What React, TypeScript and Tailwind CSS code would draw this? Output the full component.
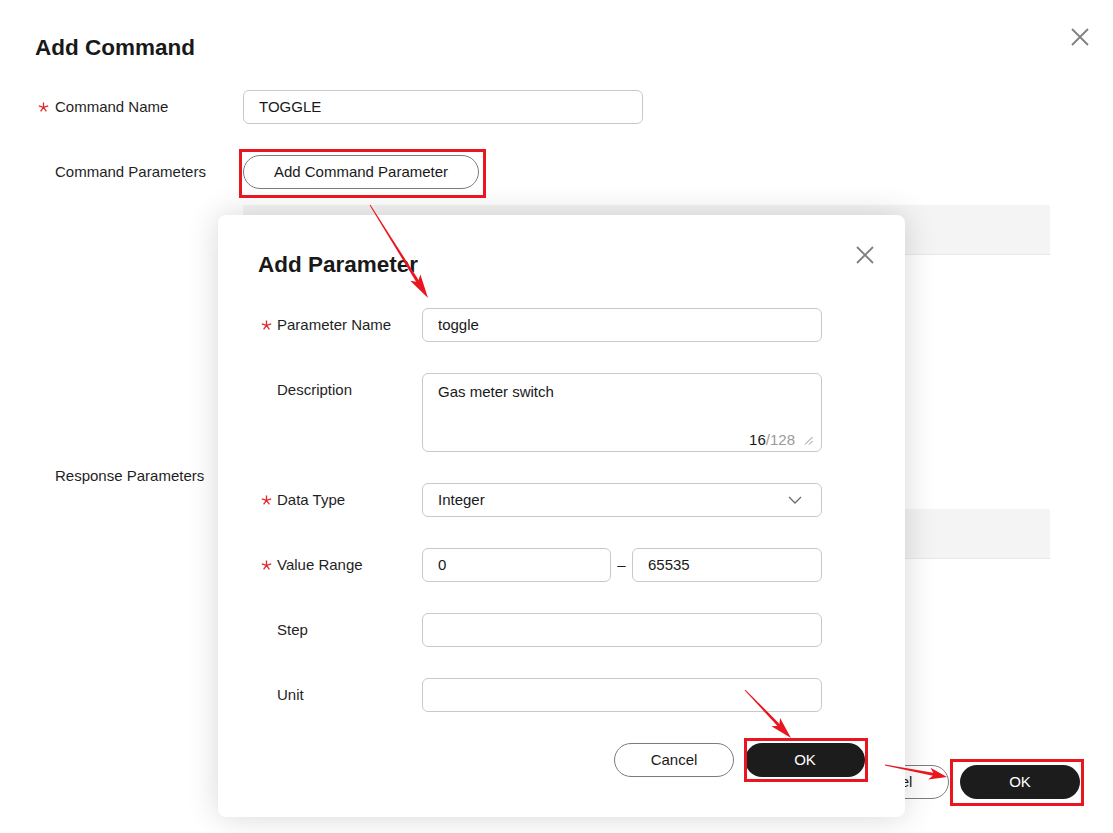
import React from "react";

const RED = "#e8161f";

function Asterisk() {
  return (
    <svg width="11" height="10" viewBox="0 0 11 10" className="shrink-0">
      <path
        d="M5.5 5.4V0.6M5.5 5.4L0.8 3.9M5.5 5.4L10.2 3.9M5.5 5.4L2.6 9.4M5.5 5.4L8.4 9.4"
        stroke="#e5262e"
        strokeWidth="1.3"
        fill="none"
      />
    </svg>
  );
}

function CloseIcon() {
  return (
    <svg width="18" height="18" viewBox="0 0 18 18">
      <path d="M1 1L17 17M17 1L1 17" stroke="#7f7f7f" strokeWidth="1.8" fill="none" />
    </svg>
  );
}

function Label({ children, required, slot }: { children: React.ReactNode; required?: boolean; slot: string }) {
  return (
    <div className="flex items-center h-[34px] text-[15px] text-[#1f1f1f]">
      <span className={`${slot} flex items-center`}>{required && <Asterisk />}</span>
      <span>{children}</span>
    </div>
  );
}

function Box({ value, className = "" }: { value?: string; className?: string }) {
  return (
    <div
      className={`h-[34px] flex items-center px-[15px] rounded-[6px] border border-[#c9c9c9] bg-white text-[15px] text-[#191919] ${className}`}
    >
      {value}
    </div>
  );
}

function Arrow({ x1, y1, x2, y2, head = 22 }: { x1: number; y1: number; x2: number; y2: number; head?: number }) {
  const dx = x2 - x1;
  const dy = y2 - y1;
  const len = Math.hypot(dx, dy);
  const ux = dx / len;
  const uy = dy / len;
  const nx = -uy;
  const ny = ux;
  const W = 6;
  const bx = x2 - ux * head;
  const by = y2 - uy * head;
  const mx = x2 - ux * (head - 5);
  const my = y2 - uy * (head - 5);
  const p = (x: number, y: number) => `${x.toFixed(1)},${y.toFixed(1)}`;
  const shaft = [
    p(x1 + nx * 0.5, y1 + ny * 0.5),
    p(mx + nx * 1.5, my + ny * 1.5),
    p(mx - nx * 1.5, my - ny * 1.5),
    p(x1 - nx * 0.5, y1 - ny * 0.5),
  ].join(" ");
  const tip = [p(x2, y2), p(bx + nx * W, by + ny * W), p(mx, my), p(bx - nx * W, by - ny * W)].join(" ");
  return (
    <g fill={RED}>
      <polygon points={shaft} />
      <polygon points={tip} />
    </g>
  );
}

export default function App() {
  return (
    <div className="relative w-[1113px] h-[833px] overflow-hidden bg-white text-[#191919] font-['Liberation_Sans',Arial,sans-serif]">
      {/* Add Command dialog */}
      <div className="flex flex-col h-full pt-[34px] pl-[35px]">
        <h2 className="text-[22.5px] leading-[28px] font-bold">Add Command</h2>

        <div className="mt-[28px] grid grid-cols-[208px_807px] gap-y-[31px]">
          <Label required slot="w-[20px] pl-[3px]">Command Name</Label>
          <Box value="TOGGLE" className="w-[400px]" />

          <Label slot="w-[20px]">Command Parameters</Label>
          <div>
            <button className="h-[34px] w-[236px] rounded-full border border-[#7c7c7c] bg-white text-[15px] text-[#191919]">
              Add Command Parameter
            </button>
            <div className="mt-[16px] h-[50px] bg-[#f4f4f4] border-b border-[#e9e9e9]" />
            <div className="h-[173px]" />
          </div>

          <Label slot="w-[20px]">Response Parameters</Label>
          <div>
            <button className="h-[34px] w-[236px] rounded-full border border-[#7c7c7c] bg-white text-[15px]">
              Add Response Parameter
            </button>
            <div className="mt-[16px] h-[50px] bg-[#f4f4f4] border-b border-[#e9e9e9]" />
          </div>
        </div>

        <div className="mt-auto flex justify-end gap-[11px] pr-[33px] pb-[34px]">
          <button className="h-[34px] w-[120px] rounded-full border border-[#7c7c7c] bg-white text-[15px]">Cancel</button>
          <button className="h-[34px] w-[120px] rounded-full bg-[#1c1c1c] text-white text-[15px]">OK</button>
        </div>
      </div>
      <button className="absolute top-[28px] right-[24px]">
        <CloseIcon />
      </button>

      {/* Add Parameter dialog */}
      <div className="absolute left-[218px] top-[215px] w-[687px] h-[602px] rounded-[8px] bg-white shadow-[0_0_32px_rgba(0,0,0,0.16)] flex flex-col px-[40px] pt-[36px] pb-[40px]">
        <button className="absolute top-[31px] right-[31px]">
          <CloseIcon />
        </button>
        <h3 className="text-[22.5px] leading-[28px] font-bold">Add Parameter</h3>

        <div className="mt-[29px] grid grid-cols-[164px_400px] gap-y-[31px]">
          <Label required slot="w-[19px] pl-[3px]">Parameter Name</Label>
          <Box value="toggle" />

          <Label slot="w-[19px]">Description</Label>
          <div className="relative h-[79px] rounded-[6px] border border-[#c9c9c9] px-[15px] pt-[8px] text-[15px] leading-[20px]">
            Gas meter switch
            <span className="absolute right-[26px] bottom-[3px] leading-[16px] text-[15px]">
              16<span className="text-[#9a9a9a]">/128</span>
            </span>
            <svg width="9" height="9" viewBox="0 0 9 9" className="absolute right-[8px] bottom-[6px]">
              <path d="M8.5 1L1 8.5M8.5 5L5 8.5" stroke="#8c8c8c" strokeWidth="1" fill="none" />
            </svg>
          </div>

          <Label required slot="w-[19px] pl-[3px]">Data Type</Label>
          <div className="h-[34px] flex items-center justify-between pl-[15px] pr-[19px] rounded-[6px] border border-[#c9c9c9] text-[15px]">
            <span>Integer</span>
            <svg width="14" height="8" viewBox="0 0 14 8">
              <path d="M1 1L7 7L13 1" stroke="#6b6b6b" strokeWidth="1.3" fill="none" />
            </svg>
          </div>

          <Label required slot="w-[19px] pl-[3px]">Value Range</Label>
          <div className="flex items-center">
            <Box value="0" className="w-[189px]" />
            <span className="w-[21px] text-center text-[15px]">–</span>
            <Box value="65535" className="flex-1" />
          </div>

          <Label slot="w-[19px]">Step</Label>
          <Box />

          <Label slot="w-[19px]">Unit</Label>
          <Box />
        </div>

        <div className="mt-auto flex justify-end gap-[11px]">
          <button className="h-[34px] w-[120px] rounded-full border border-[#7c7c7c] bg-white text-[15px]">Cancel</button>
          <button className="h-[34px] w-[120px] rounded-full bg-[#1c1c1c] text-white text-[15px]">OK</button>
        </div>
      </div>

      {/* annotations */}
      <div className="absolute left-[239px] top-[149px] w-[247px] h-[49px] border-[3px] border-[#e8161f]" />
      <div className="absolute left-[744px] top-[738px] w-[124px] h-[44px] border-[3px] border-[#e8161f]" />
      <div className="absolute left-[950px] top-[759px] w-[134px] h-[47px] border-[3px] border-[#e8161f]" />
      <svg className="absolute inset-0 pointer-events-none" width="1113" height="833">
        <Arrow x1={370} y1={205} x2={428} y2={298} head={24} />
        <Arrow x1={745} y1={690} x2={791} y2={738} head={22} />
        <Arrow x1={885} y1={765} x2={947} y2={777} head={18} />
      </svg>
    </div>
  );
}
